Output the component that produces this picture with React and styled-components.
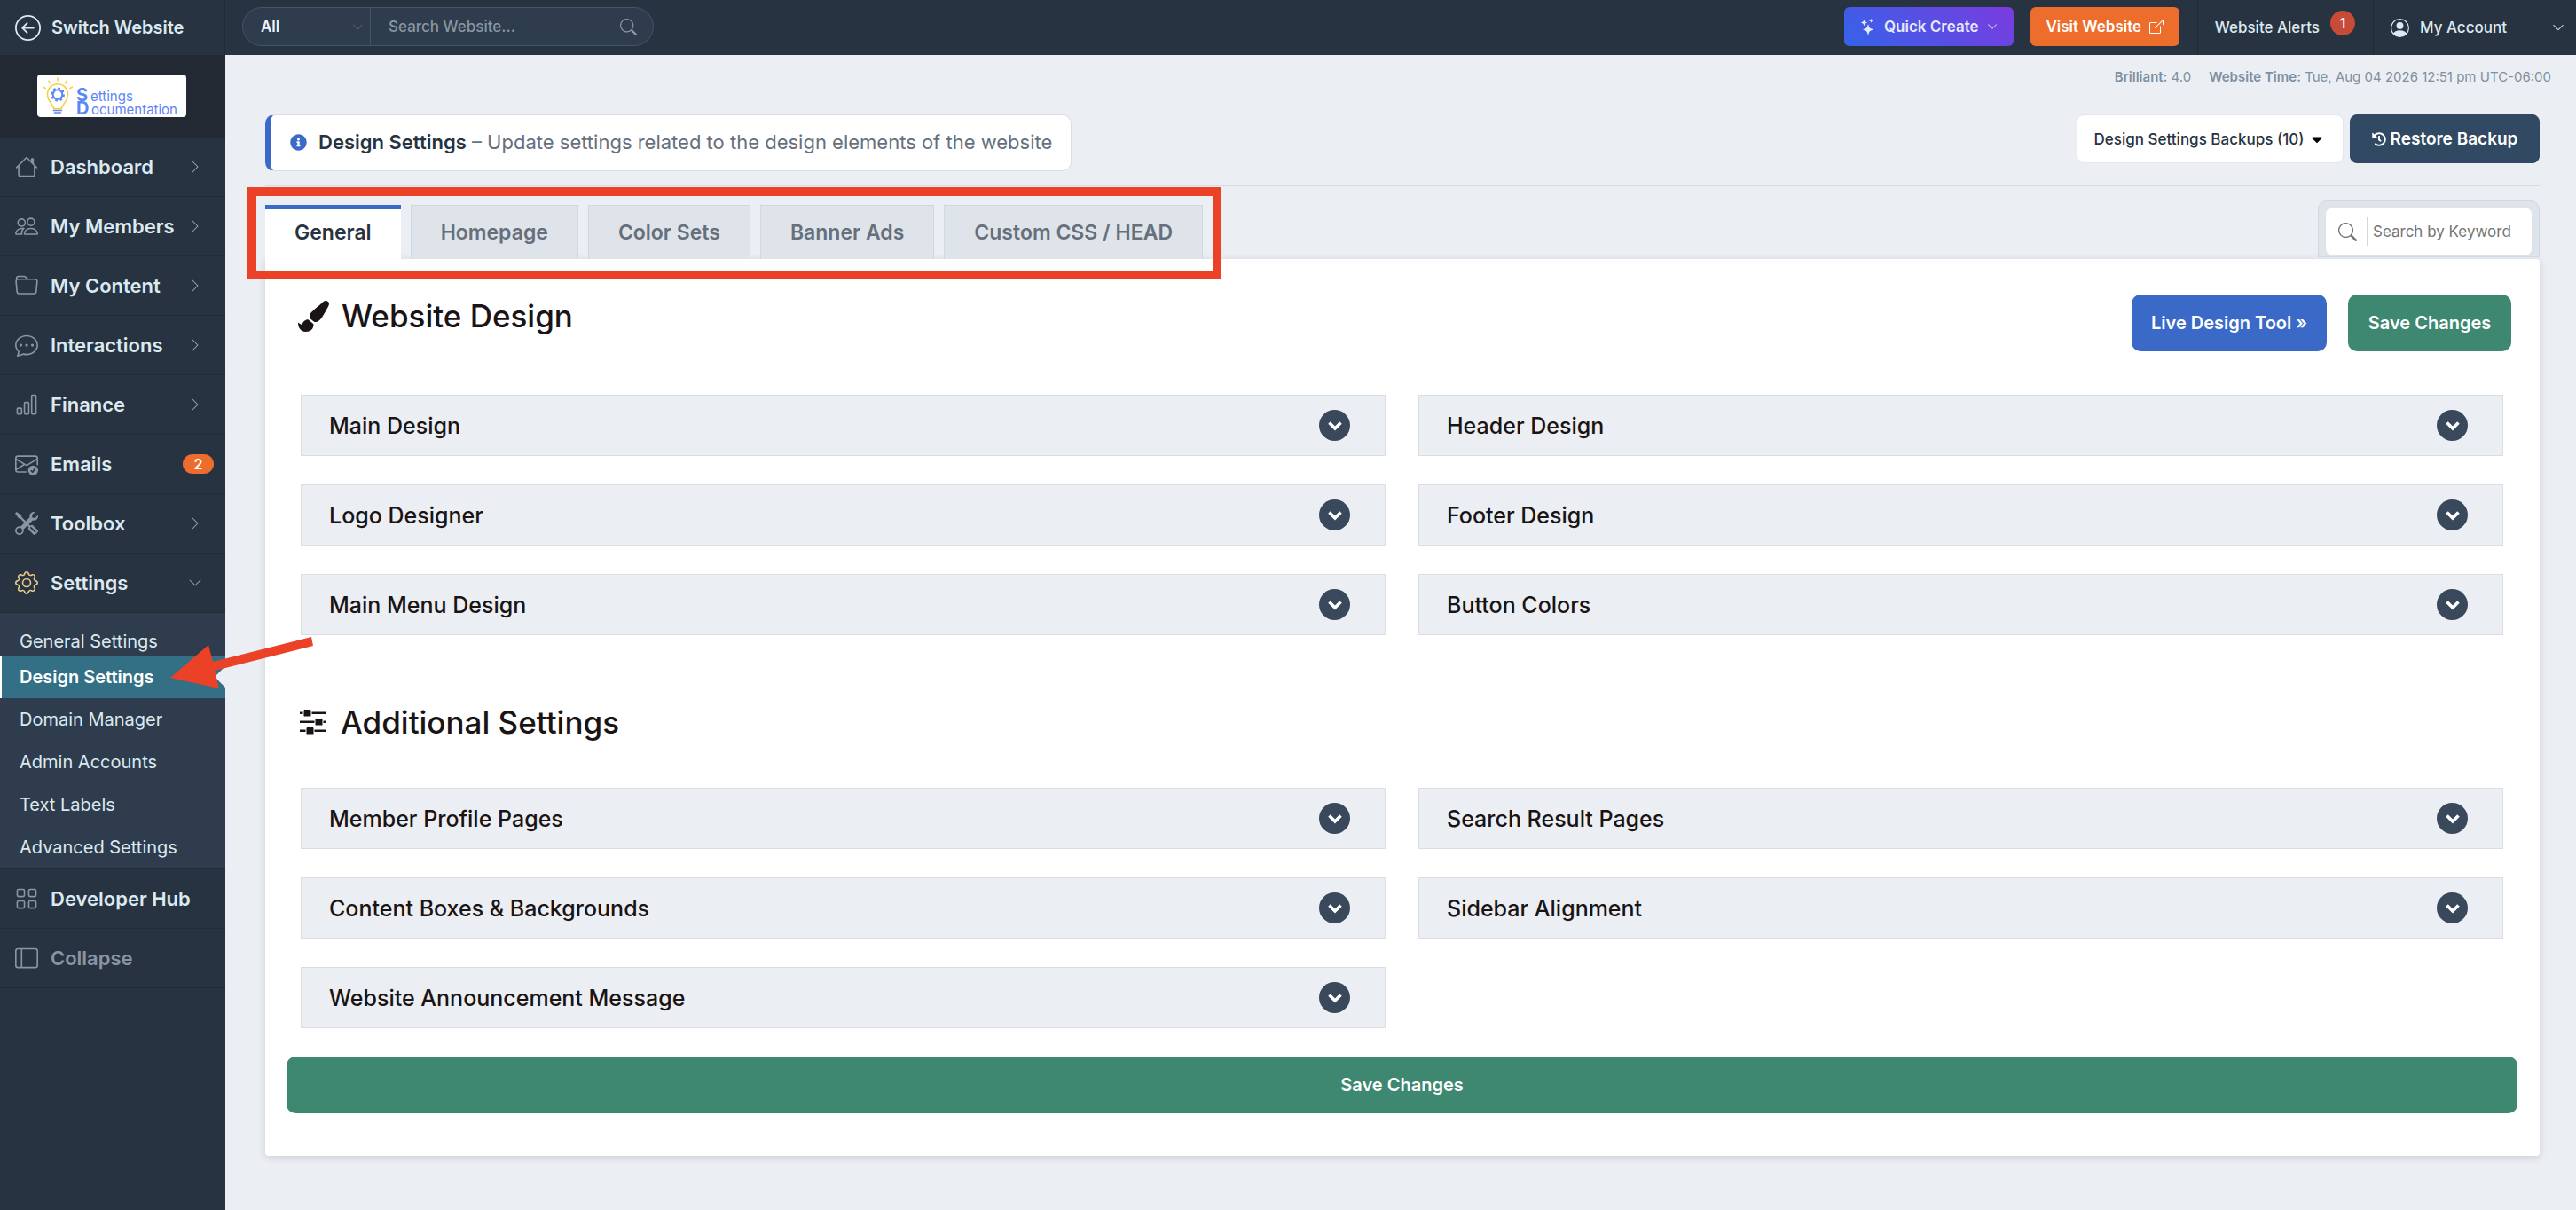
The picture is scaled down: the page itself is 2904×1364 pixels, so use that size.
import { useState } from "react";
import styled, { createGlobalStyle } from "styled-components";
import {
    BsArrowLeftCircle,
    BsHouse,
    BsPeople,
    BsFolder,
    BsChatDots,
    BsBarChart,
    BsEnvelopeCheck,
    BsTools,
    BsGear,
    BsGrid,
    BsLayoutSidebar,
    BsChevronRight,
    BsChevronDown,
    BsSearch,
    BsStars,
    BsBoxArrowUpRight,
    BsPersonCircle,
} from "react-icons/bs";
import { FaPaintBrush, FaInfoCircle, FaHistory, FaCaretDown } from "react-icons/fa";

const GlobalStyle = createGlobalStyle`
    * { box-sizing: border-box; }
    body {
        margin: 0;
        background-color: #ebeef3;
        color: #1a1414;
        font-family: Inter, "Open Sans", sans-serif;
        font-size: 20px;
        font-weight: 500;
    }
    button, input, select {
        font: inherit;
        color: inherit;
        margin: 0;
        padding: 0;
        border: none;
        background: none;
        outline: none;
    }
    button { cursor: pointer; }
    a { color: inherit; text-decoration: none; }
    svg { flex-shrink: 0; }
`

const Shell = styled.div`
    display: grid;
    grid-template-columns: 254px 1fr;
    min-height: 100vh;
`

/* ---------- sidebar ---------- */

const Sidebar = styled.aside`
    position: relative;
    z-index: 2;
    background-color: #283341;
    color: #dbe9f0;
`
const SwitchLink = styled.a`
    display: flex;
    align-items: center;
    gap: 12px;
    height: 62px;
    padding-left: 17px;
    border-right: 1px solid #222c38;
    font-weight: 600;
`
const LogoWrap = styled.div`
    display: flex;
    justify-content: center;
    padding: 22px 0 23px;
    background-color: #222933;
`
const LogoCard = styled.svg`
    width: 168px;
    height: 48px;
    margin-right: 2px;
    border-radius: 4px;
    background-color: #fff;
    font-family: Inter, sans-serif;
    overflow: visible;
`
const NavItem = styled.a`
    display: flex;
    align-items: center;
    gap: 14px;
    height: 67px;
    padding: 0 13px 0 17px;
    border-bottom: 1px solid #222c38;
    font-size: 22px;
    font-weight: 600;
    color: ${({ $muted }) => ($muted ? "#8896a3" : "#dbe9f0")};
    & > svg {
        color: ${({ $lit }) => ($lit ? "#e8c98a" : "#8896a3")};
    }
`
const NavLabel = styled.span`
    flex: 1;
    white-space: nowrap;
`
const NavArrow = styled.span`
    display: flex;
    margin-right: 13px;
    color: #9aa8b5;
`
const NavCount = styled.span`
    width: 35px;
    border-radius: 11px;
    background-color: #ed6d2c;
    color: #fff;
    font-size: 16px;
    line-height: 22px;
    text-align: center;
`
const SubMenu = styled.div`
    padding-top: 8px;
    background-color: #2e3c4d;
    border-bottom: 1px solid #222c38;
`
const SubItem = styled.a`
    position: relative;
    display: flex;
    align-items: center;
    height: ${({ $first }) => ($first ? "40px" : "48px")};
    padding: ${({ $first }) => ($first ? "8px 0 0 22px" : "0 0 0 22px")};
    font-size: 20px;
    font-weight: 400;
    ${({ $active }) => $active && `
        padding-left: 20px;
        border-left: 2px solid #fff;
        background-color: #337085;
        color: #fff;
        font-weight: 600;
    `}
`
const Notch = styled.span`
    position: absolute;
    right: 0;
    top: 12px;
    border-style: solid;
    border-width: 12px 12px 12px 0;
    border-color: transparent #ebeef3;
`
const PointerArrow = styled.svg`
    position: absolute;
    left: 190px;
    top: -22px;
    width: 162px;
    height: 60px;
`

/* ---------- top bar ---------- */

const Main = styled.div`
    min-width: 0;
`
const TopBar = styled.header`
    display: flex;
    align-items: stretch;
    height: 62px;
    padding-left: 19px;
    background-color: #283341;
    color: #dbe9f0;
    font-size: 17px;
`
const SiteSearch = styled.form`
    display: flex;
    align-items: stretch;
    align-self: center;
    width: 464px;
    height: 44px;
    margin-bottom: 2px;
    border: 1px solid #41566b;
    border-radius: 22px;
    background-color: #2e3c4d;
    overflow: hidden;
`
const ScopeLabel = styled.label`
    display: flex;
    align-items: center;
    width: 144px;
    padding: 0 7px 0 20px;
    border-right: 1px solid #41566b;
    color: #5b6b7b;
`
const ScopeSelect = styled.select`
    flex: 1;
    appearance: none;
    color: #eef4f8;
    font-weight: 600;
`
const SiteInput = styled.input`
    flex: 1;
    min-width: 0;
    padding-left: 20px;
    &::placeholder { color: #8896a3; opacity: 1; }
`
const SiteSearchButton = styled.button`
    display: flex;
    align-items: center;
    padding: 0 18px;
    color: #8896a3;
`
const TopActions = styled.div`
    display: flex;
    align-items: center;
    gap: 19px;
    margin-left: auto;
    padding: 0 20px 2px 0;
`
const TopButton = styled.button`
    display: flex;
    align-items: center;
    justify-content: center;
    gap: 9px;
    width: ${({ $wide }) => ($wide ? "191px" : "168px")};
    height: 44px;
    border-radius: 6px;
    background: ${({ $bg }) => $bg};
    color: ${({ $wide }) => ($wide ? "#e4e9fb" : "#fff")};
    font-weight: 600;
    white-space: nowrap;
`
const TopLink = styled.a`
    display: flex;
    align-items: center;
    gap: 12px;
    padding: 0 ${({ $last }) => ($last ? "13px" : "20px")} 0 19px;
    border-left: 1px solid #1f2833;
    white-space: nowrap;
    & > svg:last-child { margin-left: 39px; }
`
const AlertCount = styled.span`
    align-self: flex-start;
    width: 28px;
    margin-top: 12px;
    border-radius: 14px;
    background-color: #c84b37;
    color: #fff;
    font-size: 16px;
    line-height: 28px;
    text-align: center;
`

/* ---------- page ---------- */

const Page = styled.main`
    padding: 10px 41px 59px 45px;
`
const Status = styled.div`
    display: flex;
    justify-content: flex-end;
    gap: 20px;
    margin-right: -13px;
    color: #8090a0;
    font-size: 15px;
    font-weight: 400;
    line-height: 30px;
    b { font-weight: 600; }
`
const IntroRow = styled.div`
    display: flex;
    justify-content: space-between;
    align-items: flex-start;
    padding: 27px 0 16px;
    border-bottom: 1px solid #d7dce1;
`
const Intro = styled.p`
    display: flex;
    align-items: center;
    height: 64px;
    margin: 0;
    padding: 0 21px 2px 22px;
    border: 1px solid #dadde2;
    border-left: 6px solid #3b69c7;
    border-radius: 10px;
    background-color: #fff;
    color: #66707c;
    font-size: 22px;
    font-weight: 400;
    white-space: pre;
    svg { margin-right: 13px; color: #3b69c7; }
    b { color: #283341; font-weight: 600; }
`
const BackupActions = styled.div`
    display: flex;
    gap: 7px;
`
const BackupButton = styled.button`
    display: flex;
    align-items: center;
    justify-content: center;
    gap: 5px;
    width: ${({ $dark }) => ($dark ? "214px" : "301px")};
    height: 55px;
    border: 1px solid ${({ $dark }) => ($dark ? "#314963" : "#e3e6ea")};
    border-radius: 8px;
    background-color: ${({ $dark }) => ($dark ? "#314963" : "#fff")};
    color: ${({ $dark }) => ($dark ? "#fff" : "#283341")};
    font-size: ${({ $dark }) => ($dark ? "19px" : "17px")};
    font-weight: ${({ $dark }) => ($dark ? 600 : 500)};
    white-space: nowrap;
`
const TabRow = styled.div`
    display: flex;
    justify-content: space-between;
    padding-top: 16px;
`
const TabList = styled.div`
    position: relative;
    display: flex;
    gap: 11px;
    padding-top: 5px;
`
const Tab = styled.button`
    height: 61px;
    padding: 0 33px;
    border: 1px solid #cfd9e3;
    border-bottom: none;
    background-color: #dfe4ea;
    color: #66707c;
    font-size: 23px;
    font-weight: 600;
    white-space: nowrap;
    ${({ $active }) => $active && `
        border: none;
        border-top: 5px solid #3b69c7;
        padding: 0 33px 4px;
        background-color: #fff;
        color: #283341;
    `}
`
const Highlight = styled.div`
    position: absolute;
    inset: -15px -21px -23px -20px;
    border: 10px solid #ea4127;
    pointer-events: none;
`
const KeywordBox = styled.div`
    height: 64px;
    padding: 7px 8px 1px;
    border: 1px solid #cfd9e3;
    border-radius: 10px 10px 0 0;
    background-color: #dfe4ea;
`
const KeywordLabel = styled.label`
    display: flex;
    align-items: center;
    width: 232px;
    height: 54px;
    padding-left: 14px;
    border-radius: 8px;
    background-color: #fff;
    color: #757575;
`
const KeywordInput = styled.input`
    width: 180px;
    height: 32px;
    margin-left: 11px;
    padding-left: 6px;
    border-left: 1px solid #d4d7da;
    font-size: 17px;
    font-weight: 400;
    &::placeholder { color: #757575; opacity: 1; }
`
const Panel = styled.section`
    padding: 0 25px 48px 24px;
    border-radius: 0 4px 4px 4px;
    background-color: #fff;
    box-shadow: 0 2px 8px rgba(40, 51, 65, 0.16);
`
const PanelHead = styled.div`
    display: flex;
    align-items: center;
    justify-content: space-between;
    height: ${({ $first }) => ($first ? "129px" : "116px")};
    padding: 16px 7px 0 13px;
    border-bottom: 1px solid #ebedef;
`
const PanelTitle = styled.h2`
    display: flex;
    align-items: center;
    gap: 14px;
    margin: 0 0 ${({ $first }) => ($first ? "16px" : "0")};
    font-size: 35px;
    font-weight: 500;
    white-space: nowrap;
`
const HeadActions = styled.div`
    display: flex;
    gap: 24px;
`
const SolidButton = styled.button`
    width: ${({ $width }) => $width};
    height: 64px;
    border-radius: 10px;
    background-color: ${({ $blue }) => ($blue ? "#3b69c7" : "#3e8872")};
    color: #fff;
    font-size: 20px;
    font-weight: 600;
    white-space: nowrap;
`
const Groups = styled.div`
    display: grid;
    grid-template-columns: 1fr 1fr;
    gap: 32px 37px;
    padding: 24px 16px 32px;
`
const GroupRow = styled.button`
    display: flex;
    align-items: center;
    justify-content: space-between;
    height: 69px;
    padding: 0 39px 0 31px;
    border: 1px solid #dadde2;
    background-color: #ebeef3;
    font-size: 25px;
`
const RoundArrow = styled.span`
    display: flex;
    align-items: center;
    justify-content: center;
    width: 35px;
    height: 35px;
    border-radius: 50%;
    background-color: #39485a;
    color: #fff;
`

const navItems = [
    { label: "Dashboard", Icon: BsHouse },
    { label: "My Members", Icon: BsPeople },
    { label: "My Content", Icon: BsFolder },
    { label: "Interactions", Icon: BsChatDots },
    { label: "Finance", Icon: BsBarChart },
    { label: "Emails", Icon: BsEnvelopeCheck, count: 2 },
    { label: "Toolbox", Icon: BsTools },
    { label: "Settings", Icon: BsGear, open: true },
]

const settingsItems = [
    "General Settings",
    "Design Settings",
    "Domain Manager",
    "Admin Accounts",
    "Text Labels",
    "Advanced Settings",
]

const tabs = ["General", "Homepage", "Color Sets", "Banner Ads", "Custom CSS / HEAD"]

const designGroups = [
    "Main Design",
    "Header Design",
    "Logo Designer",
    "Footer Design",
    "Main Menu Design",
    "Button Colors",
]

const additionalGroups = [
    "Member Profile Pages",
    "Search Result Pages",
    "Content Boxes & Backgrounds",
    "Sidebar Alignment",
    "Website Announcement Message",
]

const Logo = () => (
    <LogoCard viewBox="0 0 168 48" role="img" aria-label="Settings Documentation">
        <g fill="none" stroke="#f7cf46" strokeWidth="1.6" strokeLinecap="round">
            <path d="M18.6 38.5c-.6-5-7.1-8-7.1-16.2a11.5 11.5 0 0 1 23 0c0 8.2-6.5 11.2-7.1 16.2z" />
            <path d="M23 4v3M13 7.2l1.5 2.6M33 7.2l-1.5 2.6M6.5 14l2.8 1.6M39.5 14l-2.8 1.6" />
        </g>
        <circle cx="23" cy="22.5" r="5.3" fill="none" stroke="#5b87f5" strokeWidth="2" />
        <circle cx="23" cy="22.5" r="7" fill="none" stroke="#5b87f5" strokeWidth="2" strokeDasharray="2.75 2.75" />
        <path d="M18.5 40.5h9M19.5 43h7" stroke="#5b87f5" strokeWidth="1.6" strokeLinecap="round" />
        <g fill="#5b87f5" fontSize="15">
            <text x="44" y="30" fontSize="20" fontWeight="700">S</text>
            <text x="60" y="30" fontWeight="400">ettings</text>
            <text x="44" y="45" fontSize="20" fontWeight="700">D</text>
            <text x="61" y="45" fontWeight="400">ocumentation</text>
        </g>
    </LogoCard>
)

const SlidersIcon = () => (
    <svg width="34" height="30" viewBox="0 0 34 30" fill="currentColor" aria-hidden="true">
        <path d="M2 3.5h30v2.5H2zM2 13.5h30v2.5H2zM2 23.5h30v2.5H2z" />
        <g stroke="#fff" strokeWidth="1">
            <rect x="6" y="0.5" width="9" height="8.5" rx="1.5" />
            <rect x="19" y="10.5" width="9" height="8.5" rx="1.5" />
            <rect x="9" y="20.5" width="9" height="8.5" rx="1.5" />
        </g>
    </svg>
)

const GroupList = ({ items }) => (
    <Groups>
        {items.map((item) => (
            <GroupRow key={item} type="button" aria-expanded="false">
                {item}
                <RoundArrow>
                    <svg width="18" height="14" viewBox="0 0 18 14" aria-hidden="true">
                        <path d="M2.5 3.5L9 10l6.5-6.5" fill="none" stroke="currentColor" strokeWidth="3.6" />
                    </svg>
                </RoundArrow>
            </GroupRow>
        ))}
    </Groups>
)

const Menu = () => (
    <Sidebar>
        <SwitchLink href="#">
            <BsArrowLeftCircle size={29} />
            Switch Website
        </SwitchLink>
        <LogoWrap>
            <Logo />
        </LogoWrap>
        <nav>
            {navItems.map(({ label, Icon, count, open }) => (
                <NavItem key={label} href="#" $lit={open}>
                    <Icon size={26} />
                    <NavLabel>{label}</NavLabel>
                    {count ? (
                        <NavCount>{count}</NavCount>
                    ) : (
                        <NavArrow>
                            {open ? <BsChevronDown size={16} /> : <BsChevronRight size={16} />}
                        </NavArrow>
                    )}
                </NavItem>
            ))}
            <SubMenu>
                {settingsItems.map((item, i) => (
                    <SubItem key={item} href="#" $first={i === 0} $active={i === 1}>
                        {item}
                        {i === 1 && (
                            <>
                                <Notch />
                                <PointerArrow viewBox="0 0 162 60" aria-hidden="true">
                                    <path
                                        d="M0 47L43 10L48 29L159 1L161 11L50 39L55 59Z"
                                        fill="#ea4127"
                                    />
                                </PointerArrow>
                            </>
                        )}
                    </SubItem>
                ))}
            </SubMenu>
            <NavItem href="#">
                <BsGrid size={26} />
                <NavLabel>Developer Hub</NavLabel>
            </NavItem>
            <NavItem href="#" $muted>
                <BsLayoutSidebar size={26} />
                <NavLabel>Collapse</NavLabel>
            </NavItem>
        </nav>
    </Sidebar>
)

const Header = () => (
    <TopBar>
        <SiteSearch onSubmit={(e) => e.preventDefault()}>
            <ScopeLabel>
                <ScopeSelect aria-label="Search in">
                    <option>All</option>
                </ScopeSelect>
                <BsChevronDown size={13} />
            </ScopeLabel>
            <SiteInput type="text" aria-label="Search Website" placeholder="Search Website..." />
            <SiteSearchButton type="submit" aria-label="Search">
                <BsSearch size={19} />
            </SiteSearchButton>
        </SiteSearch>
        <TopActions>
            <TopButton type="button" $wide $bg="linear-gradient(45deg, #3563e9, #7a3be0)">
                <BsStars size={18} />
                Quick Create
                <BsChevronDown size={12} />
            </TopButton>
            <TopButton type="button" $bg="#ed6d2c">
                Visit Website
                <BsBoxArrowUpRight size={16} />
            </TopButton>
        </TopActions>
        <TopLink href="#">
            Website Alerts
            <AlertCount>1</AlertCount>
        </TopLink>
        <TopLink href="#" $last>
            <BsPersonCircle size={21} />
            My Account
            <BsChevronDown size={14} />
        </TopLink>
    </TopBar>
)

const App = () => {
    const [tab, setTab] = useState("General")

    return (
        <Shell>
            <GlobalStyle />
            <Menu />
            <Main>
                <Header />
                <Page>
                    <Status>
                        <span><b>Brilliant:</b> 4.0</span>
                        <span><b>Website Time:</b> Tue, Aug 04 2026 12:51 pm UTC-06:00</span>
                    </Status>
                    <IntroRow>
                        <Intro>
                            <FaInfoCircle size={19} />
                            <b>Design Settings</b> – Update settings related to the design elements of the website
                        </Intro>
                        <BackupActions>
                            <BackupButton type="button">
                                Design Settings Backups (10)
                                <FaCaretDown size={20} color="#000" />
                            </BackupButton>
                            <BackupButton type="button" $dark>
                                <FaHistory size={16} />
                                Restore Backup
                            </BackupButton>
                        </BackupActions>
                    </IntroRow>
                    <TabRow>
                        <TabList role="tablist">
                            {tabs.map((name) => (
                                <Tab
                                    key={name}
                                    type="button"
                                    role="tab"
                                    aria-selected={tab === name}
                                    $active={tab === name}
                                    onClick={() => setTab(name)}
                                >
                                    {name}
                                </Tab>
                            ))}
                            <Highlight />
                        </TabList>
                        <KeywordBox>
                            <KeywordLabel>
                                <BsSearch size={21} />
                                <KeywordInput type="text" aria-label="Search by Keyword" placeholder="Search by Keyword" />
                            </KeywordLabel>
                        </KeywordBox>
                    </TabRow>
                    <Panel>
                        <PanelHead $first>
                            <PanelTitle $first>
                                <FaPaintBrush size={35} />
                                Website Design
                            </PanelTitle>
                            <HeadActions>
                                <SolidButton type="button" $width="220px" $blue>Live Design Tool »</SolidButton>
                                <SolidButton type="button" $width="184px">Save Changes</SolidButton>
                            </HeadActions>
                        </PanelHead>
                        <GroupList items={designGroups} />
                        <PanelHead>
                            <PanelTitle>
                                <SlidersIcon />
                                Additional Settings
                            </PanelTitle>
                        </PanelHead>
                        <GroupList items={additionalGroups} />
                        <SolidButton type="button" $width="100%">Save Changes</SolidButton>
                    </Panel>
                </Page>
            </Main>
        </Shell>
    )
}

export default App;
